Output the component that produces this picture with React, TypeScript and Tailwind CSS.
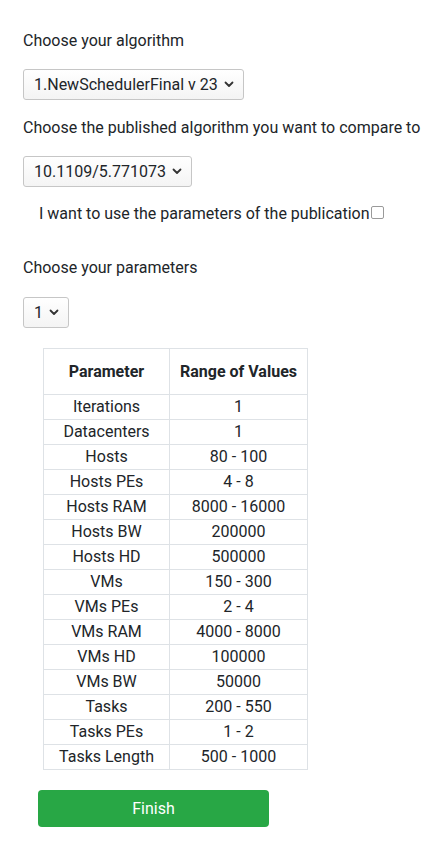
import React from "react";

function Chevron() {
  return (
    <svg width="10" height="7" viewBox="0 0 10 7" className="ml-[6px] shrink-0">
      <path d="M1.5 1.5 L5 5 L8.5 1.5" fill="none" stroke="#333" strokeWidth="1.8" strokeLinecap="round" strokeLinejoin="round" />
    </svg>
  );
}

function Select({ value }: { value: string }) {
  return (
    <div className="inline-flex h-[31px] items-center whitespace-nowrap rounded-[3px] border border-[#c6c6c6] bg-gradient-to-b from-white to-[#f4f4f4] pl-[10px] pr-[9px] text-[16px] leading-[24px] text-[#212529]">
      <span>{value}</span>
      <Chevron />
    </div>
  );
}

const rows: [string, string][] = [
  ["Iterations", "1"],
  ["Datacenters", "1"],
  ["Hosts", "80 - 100"],
  ["Hosts PEs", "4 - 8"],
  ["Hosts RAM", "8000 - 16000"],
  ["Hosts BW", "200000"],
  ["Hosts HD", "500000"],
  ["VMs", "150 - 300"],
  ["VMs PEs", "2 - 4"],
  ["VMs RAM", "4000 - 8000"],
  ["VMs HD", "100000"],
  ["VMs BW", "50000"],
  ["Tasks", "200 - 550"],
  ["Tasks PEs", "1 - 2"],
  ["Tasks Length", "500 - 1000"],
];

export default function App() {
  return (
    <div
      className="min-h-[842px] overflow-hidden bg-white px-[23px] pt-[29px] text-[16px] leading-[24px] text-[#212529]"
      style={{ fontFamily: "Roboto, 'Liberation Sans', sans-serif" }}
    >
      <div className="whitespace-nowrap">Choose your algorithm</div>
      <div className="mt-[16px]">
        <Select value="1.NewSchedulerFinal v 23" />
      </div>
      <div className="mt-[16px] whitespace-nowrap">Choose the published algorithm you want to compare to</div>
      <div className="mt-[16px]">
        <Select value="10.1109/5.771073" />
      </div>
      <div className="mt-[15px] flex items-center whitespace-nowrap pl-[16px]">
        <span>I want to use the parameters of the publication</span>
        <span className="ml-[1px] mt-[-3px] inline-block h-[13px] w-[13px] shrink-0 rounded-[2px] border border-[#9a9a9a] bg-white" />
      </div>
      <div className="mt-[30px]">Choose your parameters</div>
      <div className="mt-[17px]">
        <Select value="1" />
      </div>
      <div className="mt-[20px] pl-[20px]">
        <table className="border-collapse text-center">
          <thead>
            <tr>
              <th className="h-[46px] w-[126px] border border-[#dee2e6] font-bold">Parameter</th>
              <th className="h-[46px] w-[138px] border border-[#dee2e6] font-bold">Range of Values</th>
            </tr>
          </thead>
          <tbody>
            {rows.map(([p, v]) => (
              <tr key={p}>
                <td className="h-[25px] border border-[#dee2e6] p-0">{p}</td>
                <td className="h-[25px] border border-[#dee2e6] p-0">{v}</td>
              </tr>
            ))}
          </tbody>
        </table>
      </div>
      <div className="mt-[20px] pl-[15px]">
        <button className="h-[37px] w-[231px] rounded-[4px] bg-[#28a745] text-[16px] text-white">Finish</button>
      </div>
    </div>
  );
}
